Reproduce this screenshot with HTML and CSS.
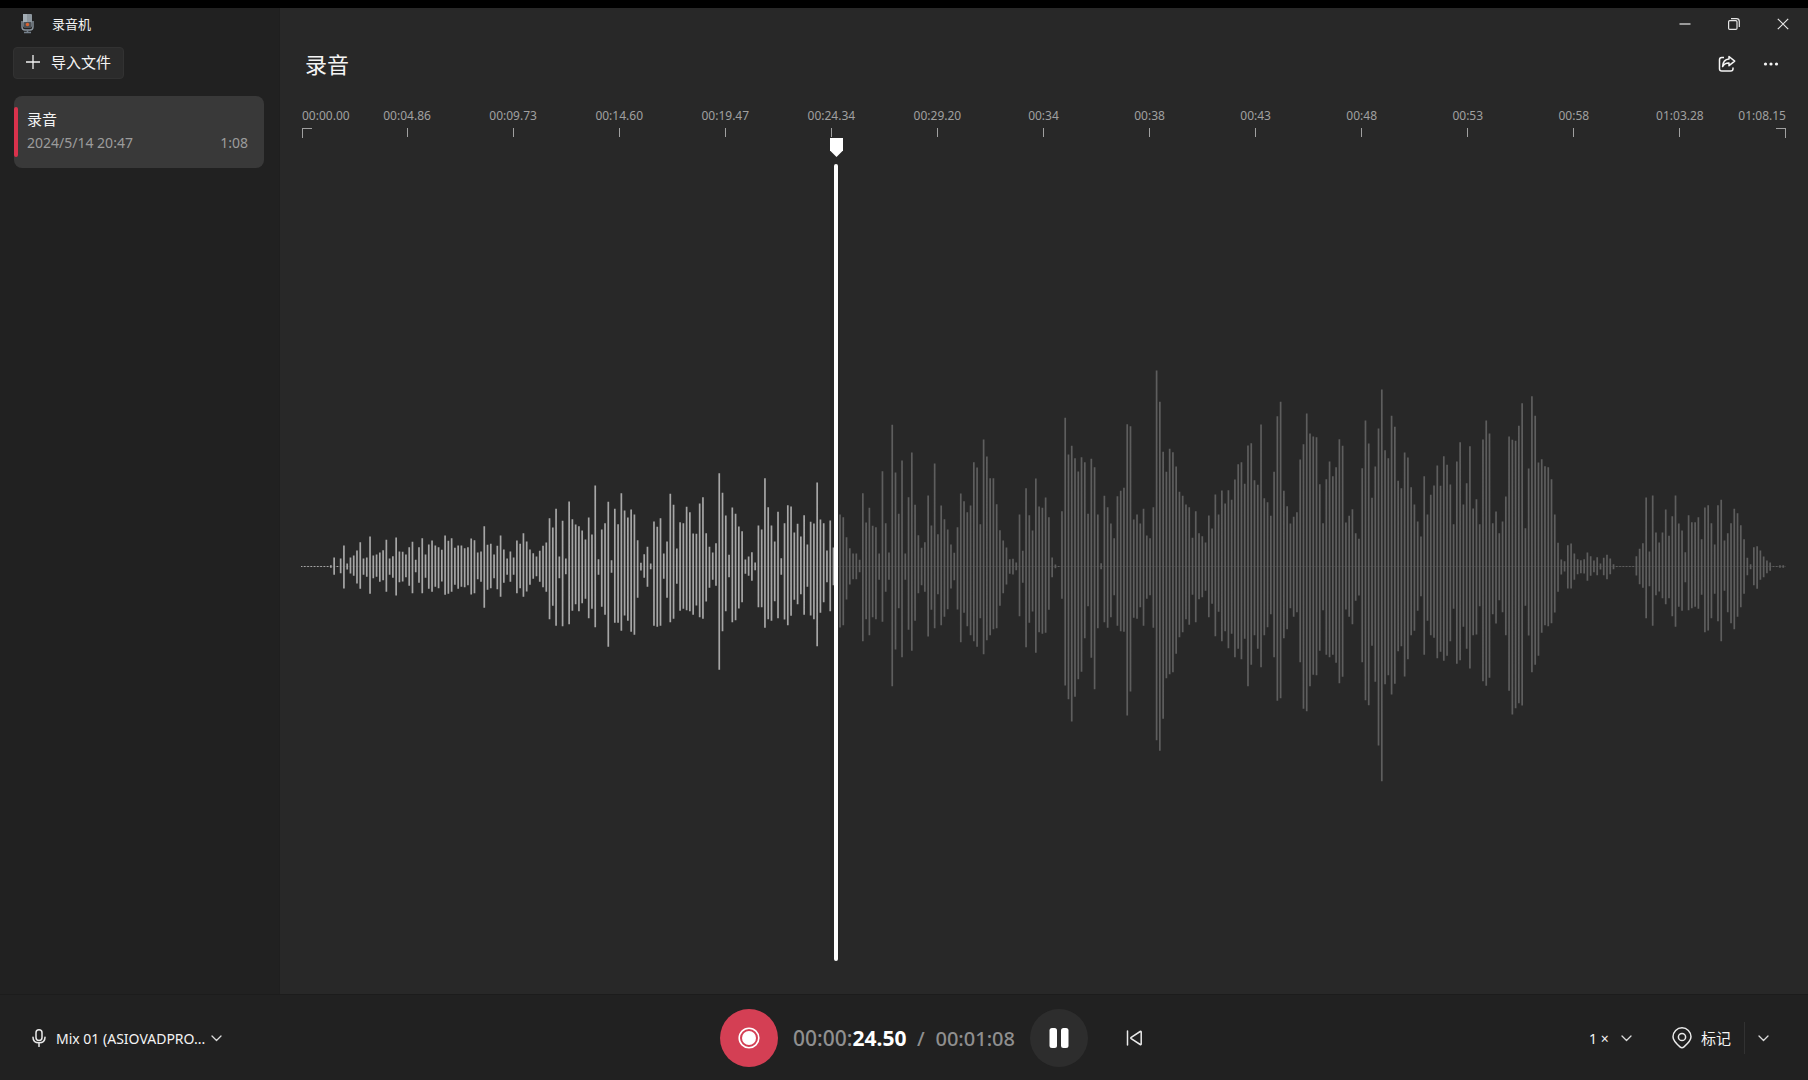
FILE: index.html
```html
<!DOCTYPE html>
<html lang="zh-CN">
<head>
<meta charset="utf-8">
<meta name="viewport" content="width=device-width, initial-scale=1">
<title>录音机</title>
<link rel="stylesheet" href="styles.css">
</head>
<body>
<div class="app">
  <aside class="sidebar">
    <div class="brand">
      <svg class="brand-icon" width="14" height="20" viewBox="0 0 14 20" aria-hidden="true">
        <rect x="3" y="0" width="9" height="13" rx="1" fill="#8d979f"/>
        <rect x="3" y="0" width="4" height="8" fill="#a3adb4"/>
        <path d="M2 7v6q0 3 3 3h5q3 0 3-3V7" fill="none" stroke="#8a949d" stroke-width="1.4"/>
        <rect x="3.500" y="8" width="8" height="6" rx="1" fill="#4b5055"/>
        <circle cx="7.500" cy="10.500" r="1.700" fill="#d9622f"/>
        <path d="M7.500 16v2M4 18.500h7" stroke="#76818c" stroke-width="1.600"/>
      </svg>
      <span>录音机</span>
    </div>
    <button class="import" type="button">
      <svg width="14" height="14" viewBox="0 0 14 14" aria-hidden="true"><path d="M7 0v14M0 7h14" stroke="#f2f2f2" stroke-width="1.3"/></svg>
      导入文件
    </button>
    <ul class="recordings">
      <li class="recording">
        <h2 class="recording-name">录音</h2>
        <p class="recording-meta"><time>2024/5/14 20:47</time><span>1:08</span></p>
      </li>
    </ul>
  </aside>

  <main class="editor">
    <div class="window-controls">
      <button type="button" aria-label="最小化"><svg width="12" height="12" viewBox="0 0 12 12"><path d="M0.500 6h11" /></svg></button>
      <button type="button" aria-label="还原"><svg width="12" height="12" viewBox="0 0 12 12"><rect x="0.600" y="2.600" width="8.400" height="8.800" rx="1.200"/><path d="M3 0.700h5.500q2.800 0 2.800 2.800V9"/></svg></button>
      <button type="button" aria-label="关闭"><svg width="12" height="12" viewBox="0 0 12 12"><path d="M0.800 0.800l10.400 10.400M11.200 0.800L0.800 11.200"/></svg></button>
    </div>
    <header class="heading">
      <h1>录音</h1>
      <div class="heading-actions">
        <button type="button" aria-label="共享">
          <svg width="18" height="18" viewBox="0 0 18 18" aria-hidden="true"><path d="M6 2.500H3.800Q1.500 2.500 1.500 4.800v8.900Q1.500 16 3.800 16h8.900q2.300 0 2.300-2.300V12.500"/><path d="M11 1.500l5.700 4.600L11 10.700V8.100Q6.800 7.900 4.600 11.500 5 4.700 11 4.100z"/></svg>
        </button>
        <button type="button" aria-label="更多">
          <svg class="dots" width="16" height="4" viewBox="0 0 16 4" aria-hidden="true"><circle cx="2.500" cy="2" r="1.600"/><circle cx="8" cy="2" r="1.600"/><circle cx="13.500" cy="2" r="1.600"/></svg>
        </button>
      </div>
    </header>

    <section class="timeline">
      <ol class="ruler">
        <li>00:00.00</li><li>00:04.86</li><li>00:09.73</li><li>00:14.60</li><li>00:19.47</li>
        <li>00:24.34</li><li>00:29.20</li><li>00:34</li><li>00:38</li><li>00:43</li>
        <li>00:48</li><li>00:53</li><li>00:58</li><li>01:03.28</li><li>01:08.15</li>
      </ol>
      <div class="stage">
        <svg class="wave" viewBox="0 0 1485 856" preserveAspectRatio="none" role="img" aria-label="波形">
          <path class="axis" d="M0 428.500H1485"/>
          <path id="played" class="played"/>
          <path id="pending" class="pending"/>
        </svg>
        <div class="playhead" style="left:36%">
          <svg class="grip" width="13" height="19" viewBox="0 0 13 19" aria-hidden="true"><path d="M0 0h13v12.500L6.500 19 0 12.500z" fill="#fff"/></svg>
        </div>
      </div>
    </section>
  </main>

  <footer class="transport">
    <label class="device">
      <svg width="14" height="18" viewBox="0 0 14 18" aria-hidden="true"><rect x="4" y="0.800" width="6" height="10.600" rx="3"/><path d="M1 8.200q0 5.600 6 5.600t6-5.600M7 13.800v3.600"/></svg>
      <select aria-label="输入设备"><option>Mix 01 (ASIOVADPRO...</option></select>
      <svg class="chevron" width="11" height="7" viewBox="0 0 11 7" aria-hidden="true"><path d="M1 1l4.500 4.500L10 1"/></svg>
    </label>

    <div class="player">
      <button class="round record" type="button" aria-label="录制">
        <svg width="22" height="22" viewBox="0 0 22 22" aria-hidden="true"><circle cx="11" cy="11" r="9.800" fill="none" stroke="#fff" stroke-width="1.600"/><circle cx="11" cy="11" r="7" fill="#fff"/></svg>
      </button>
      <p class="clock"><span class="elapsed">00:00:<b>24.50</b></span><span class="slash">/</span><span class="total">00:01:08</span></p>
      <button class="round pause" type="button" aria-label="暂停">
        <svg width="20" height="20" viewBox="0 0 20 20" aria-hidden="true"><rect x="0.500" y="0" width="7.500" height="20" rx="2.500" fill="#fff"/><rect x="12" y="0" width="7.500" height="20" rx="2.500" fill="#fff"/></svg>
      </button>
    </div>

    <div class="extras">
      <button class="skip" type="button" aria-label="跳到开头">
        <svg width="18" height="18" viewBox="0 0 18 18" aria-hidden="true"><path d="M1.500 2v14M15.200 3v12q0 1-1 .5L5.200 9.600q-.8-.6 0-1.200l9-5.900q1-.5 1 .5z"/></svg>
      </button>
      <div class="extras-end">
        <label class="speed">
          <select aria-label="播放速度"><option>1 ×</option></select>
          <svg class="chevron" width="11" height="7" viewBox="0 0 11 7" aria-hidden="true"><path d="M1 1l4.500 4.500L10 1"/></svg>
        </label>
        <button class="mark" type="button">
          <svg width="20" height="22" viewBox="0 0 20 22" aria-hidden="true"><path d="M10 20.800q-1 0-2-.9C3.500 16 1 13 1 9.800a9 9 0 0 1 18 0c0 3.200-2.500 6.200-7 10.100q-1 .9-2 .9z"/><circle cx="10" cy="10" r="3.600"/></svg>
          <span>标记</span>
        </button>
        <button class="mark-menu" type="button" aria-label="标记选项">
          <svg class="chevron" width="11" height="7" viewBox="0 0 11 7" aria-hidden="true"><path d="M1 1l4.500 4.500L10 1"/></svg>
        </button>
      </div>
    </div>
  </footer>
</div>
<script src="wave.js"></script>
</body>
</html>
```

FILE: styles.css
```css
* {
  box-sizing: border-box;
  margin: 0;
  padding: 0;
}

body {
  background: #000;
  color: #f4f4f4;
  font-family: "Noto Sans", "Noto Sans CJK SC", sans-serif;
  font-size: 14px;
}

button,
select {
  background: none;
  border: 0;
  color: inherit;
  font: inherit;
}

select {
  appearance: none;
}

svg {
  display: block;
  flex: none;
  fill: none;
}

.app {
  display: grid;
  grid-template-columns: 280px 1fr;
  grid-template-rows: 1fr auto;
  min-height: 100vh;
  padding-top: 8px;
}

/* Sidebar */

.sidebar {
  background: #212121;
  border-right: 1px solid #1f1f1f;
  padding: 0 15px 16px 13px;
}

.brand {
  display: flex;
  align-items: center;
  gap: 18px;
  height: 32px;
  padding: 0 0 1px 7px;
  font-size: 13px;
}

.import {
  display: flex;
  align-items: center;
  gap: 11px;
  height: 32px;
  margin-top: 7px;
  padding: 0 12px 3px 12px;
  background: #2b2b2b;
  border: 1px solid #323232;
  border-radius: 4px;
  font-size: 15px;
}

.recordings {
  list-style: none;
  margin: 17px 0 0 1px;
}

.recording {
  position: relative;
  display: grid;
  align-content: center;
  gap: 2px;
  height: 72px;
  padding: 0 16px 3px 13px;
  background: #393939;
  border-radius: 8px;
}

.recording::before {
  content: "";
  position: absolute;
  left: 0;
  top: 11px;
  bottom: 11px;
  width: 4px;
  background: #d9324c;
  border-radius: 2px;
}

.recording-name {
  font-size: 15px;
  font-weight: 400;
  line-height: 22px;
}

.recording-meta {
  display: flex;
  justify-content: space-between;
  color: #9c9c9c;
  line-height: 22px;
}

/* Editor */

.editor {
  display: flex;
  flex-direction: column;
  background: #282828;
}

.window-controls {
  display: flex;
  justify-content: flex-end;
  height: 32px;
  padding-right: 1px;
}

.window-controls button {
  display: grid;
  place-items: center;
  width: 49px;
}

.window-controls svg {
  stroke: #e6e6e6;
  stroke-width: 1.2;
}

.heading {
  display: flex;
  align-items: center;
  justify-content: space-between;
  height: 48px;
  padding: 0 15px 0 25px;
}

.heading h1 {
  font-size: 22px;
  font-weight: 400;
  line-height: 32px;
}

.heading-actions {
  display: flex;
}

.heading-actions button {
  display: grid;
  place-items: center;
  width: 44px;
  height: 32px;
}

.heading-actions svg {
  stroke: #f4f4f4;
  stroke-width: 1.5;
  stroke-linejoin: round;
}

.heading-actions .dots {
  fill: #f4f4f4;
  stroke: none;
}

.timeline {
  flex: 1;
  display: flex;
  flex-direction: column;
  padding: 20px 22px 0 21px;
}

.ruler {
  display: grid;
  grid-template-columns: 1fr repeat(13, 2fr) 1fr;
  list-style: none;
  color: #a0a0a0;
  font-size: 12px;
  line-height: 16px;
  white-space: nowrap;
}

.ruler li {
  display: flex;
  flex-direction: column;
  align-items: center;
  gap: 4px;
  min-width: 0;
}

.ruler li::after {
  content: "";
  width: 1px;
  height: 9px;
  background: #a0a0a0;
}

.ruler li:first-child {
  align-items: flex-start;
  padding-left: 1px;
}

.ruler li:last-child {
  align-items: flex-end;
}

.ruler li:first-child::after,
.ruler li:last-child::after {
  width: 9px;
  background: none;
  border: 0 solid #a0a0a0;
  border-top-width: 1px;
}

.ruler li:first-child::after {
  border-left-width: 1px;
}

.ruler li:last-child::after {
  border-right-width: 1px;
}

.stage {
  position: relative;
  flex: 1;
  min-height: 320px;
}

.wave {
  position: absolute;
  inset: 0;
  width: 100%;
  height: 100%;
}

.wave path {
  vector-effect: non-scaling-stroke;
  stroke-width: 1.7;
}

.wave .axis {
  stroke: #3b3b3b;
  stroke-width: 1;
}

.wave .played {
  stroke: #a6a6a6;
}

.wave .pending {
  stroke: #5e5e5e;
}

.playhead {
  position: absolute;
  top: 26px;
  bottom: 33px;
  width: 4px;
  margin-left: -2px;
  background: #fff;
  border-radius: 2px;
}

.grip {
  position: absolute;
  left: -4px;
  top: -26px;
}

/* Transport bar */

.transport {
  grid-column: 1 / -1;
  display: grid;
  grid-template-columns: 1fr auto 1fr;
  align-items: center;
  height: 86px;
  padding-top: 1px;
  background: #212121;
  border-top: 1px solid #1c1c1c;
}

.transport svg {
  stroke-linecap: round;
  stroke-linejoin: round;
}

.device {
  display: flex;
  align-items: center;
  gap: 10px;
  padding-left: 32px;
}

.device svg,
.skip svg,
.mark svg {
  stroke: #eaeaea;
  stroke-width: 1.5;
}

.device .chevron,
.transport .chevron {
  stroke: #dcdcdc;
  stroke-width: 1.3;
  pointer-events: none;
}

.device .chevron {
  margin-left: -5px;
}

.player {
  display: flex;
  align-items: center;
  gap: 15px;
}

.round {
  display: grid;
  place-items: center;
  width: 58px;
  height: 58px;
  border-radius: 50%;
}

.record {
  background: #d43f54;
}

.pause {
  background: #2d2d2d;
}

.clock {
  display: flex;
  align-items: baseline;
  justify-content: space-between;
  width: 222px;
  color: #8f8f8f;
  font-size: 20px;
  font-weight: 500;
  line-height: 28px;
}

.elapsed {
  font-size: 21px;
}

.elapsed b {
  color: #fff;
  font-weight: 700;
}

.extras {
  display: flex;
  align-items: center;
  justify-content: space-between;
  padding: 0 27px;
}

.skip {
  display: grid;
  place-items: center;
  width: 40px;
  height: 40px;
}

.extras-end,
.speed,
.mark {
  display: flex;
  align-items: center;
}

.speed {
  gap: 12px;
  margin-right: 40px;
}

.mark {
  gap: 9px;
  padding-right: 13px;
  font-size: 15px;
}

.mark span {
  padding-bottom: 2px;
}

.mark-menu {
  display: grid;
  place-items: center;
  width: 37px;
  height: 32px;
  border-left: 1px solid #323232;
}
```

FILE: wave.js
```js
// Peak heights of each sample bar, as "above,below" the axis.
const peaks = `
1,1 1,1 1,1 1,1 1,1 1,1 1,1 1,1 1,1 4,4
27,25 1,1 24,20 63,66 9,9 27,21 33,28 48,51 73,67 24,25
27,31 90,82 33,35 36,31 42,46 49,41 80,76 24,25 31,34 87,87
45,47 44,45 36,32 58,58 74,80 20,17 58,49 85,80 36,34 66,67
78,76 63,61 58,65 50,45 93,85 77,82 85,76 56,55 63,67 63,61
55,62 58,56 84,84 79,80 42,38 45,46 121,124 65,70 68,65 36,35
62,68 93,91 51,49 24,25 45,46 27,25 78,80 68,65 100,91 75,75
51,55 40,37 30,29 47,46 62,62 72,76 145,158 117,118 173,178 30,35
137,179 24,23 195,173 142,133 126,113 121,134 108,110 81,97 147,155 96,127
243,182 22,25 111,121 130,145 194,241 19,19 173,169 127,169 220,193 168,147
147,163 171,196 156,205 79,94 11,12 37,34 59,61 9,8 135,178 119,181
145,178 39,37 75,94 218,167 185,157 54,52 133,133 130,127 179,131 163,134
99,145 98,117 189,152 208,157 100,105 59,64 42,40 70,58 280,310 221,194
153,134 35,32 177,167 158,161 120,126 106,107 21,22 30,28 43,43 12,11
123,122 111,122 265,184 178,158 123,163 75,104 164,155 25,25 130,159 184,176
180,148 102,100 128,113 90,83 154,145 66,61 134,147 129,158 252,239 141,139
130,107 48,47 138,134 57,56 100,100 156,183 148,176 88,99 55,54 39,38
39,38 20,17 220,224 132,158 176,206 122,152 118,158 39,40 286,166 130,76
42,40 425,359 282,249 158,125 318,272 39,40 208,190 342,253 185,163 94,80
56,56 73,76 213,210 123,130 309,185 97,83 183,176 142,151 111,128 66,66
41,41 118,129 219,227 196,139 163,179 183,206 313,224 297,241 127,155 381,263
330,221 265,206 265,188 187,185 109,118 78,80 57,54 22,22 23,24 12,11
156,149 47,49 235,242 154,169 108,135 264,259 180,197 176,202 207,199 148,130
27,32 6,5 1,1 166,97 446,357 336,398 362,465 325,391 285,338 328,316
313,215 158,119 323,274 298,368 156,185 10,8 212,167 178,184 129,152 85,86
211,178 227,194 236,196 427,447 421,375 141,154 156,157 129,122 173,178 93,97
85,86 178,184 588,521 494,553 344,457 284,335 353,323 343,317 300,262 224,212
212,197 186,158 178,175 86,85 166,167 100,98 91,92 72,73 153,152 114,112
216,209 156,136 228,224 189,194 229,245 200,202 261,272 307,247 313,278 248,217
363,359 370,295 259,206 245,247 426,302 205,206 193,182 152,143 284,272 451,403
494,395 227,215 181,188 129,125 149,151 163,137 321,287 367,427 459,434 399,359
390,325 388,326 247,253 130,131 262,265 315,272 271,265 298,289 382,350 362,331
132,129 152,151 172,173 100,103 83,87 295,287 438,401 369,416 206,238 300,346
414,537 531,644 349,353 325,326 452,384 419,352 257,254 235,239 342,330 327,278
238,206 186,193 135,133 90,89 271,265 156,163 215,206 243,214 303,275 242,256
331,283 305,268 246,224 127,127 315,292 373,281 186,181 250,247 361,306 174,206
202,204 127,119 381,344 438,358 399,334 130,143 165,171 100,101 135,137 210,206
390,373 380,444 377,425 422,410 490,417 115,118 294,207 511,317 452,295 312,268
322,199 301,176 298,179 262,170 156,138 71,76 21,24 16,15 64,66 69,66
39,40 22,23 19,20 22,21 42,43 31,28 18,17 28,26 9,9 26,26
35,38 24,23 7,8 1,1 1,1 1,1 1,1 1,1 1,1 31,27
53,53 70,64 207,155 45,59 213,178 102,86 72,75 102,95 171,113 92,95
151,149 213,181 129,121 108,133 43,47 154,131 133,125 133,121 148,127 82,85
177,197 184,192 130,155 66,82 184,164 200,224 78,73 100,137 130,170 173,188
160,151 124,122 82,82 26,26 7,8 58,56 61,67 48,40 30,32 18,20
12,13 1,1 1,1 4,4 4,4`.trim().split(/\s+/).map((pair) => pair.split(",").map(Number));

const WIDTH = 1485;
const AXIS = 428.5;
const UNITS_PER_PEAK = 3;
const progress = 0.36;
const step = WIDTH / peaks.length;

function barsPath(from, to) {
  let d = "";
  for (let i = from; i < to; i++) {
    const x = (0.5 + i * step).toFixed(2);
    const [up, down] = peaks[i];
    const top = (AXIS - Math.max(up, 1.5) / UNITS_PER_PEAK).toFixed(2);
    const bottom = (AXIS + Math.max(down, 1.5) / UNITS_PER_PEAK).toFixed(2);
    d += `M${x} ${top}V${bottom}`;
  }
  return d;
}

const split = Math.round(peaks.length * progress);
document.getElementById("played").setAttribute("d", barsPath(0, split));
document.getElementById("pending").setAttribute("d", barsPath(split, peaks.length));
```
